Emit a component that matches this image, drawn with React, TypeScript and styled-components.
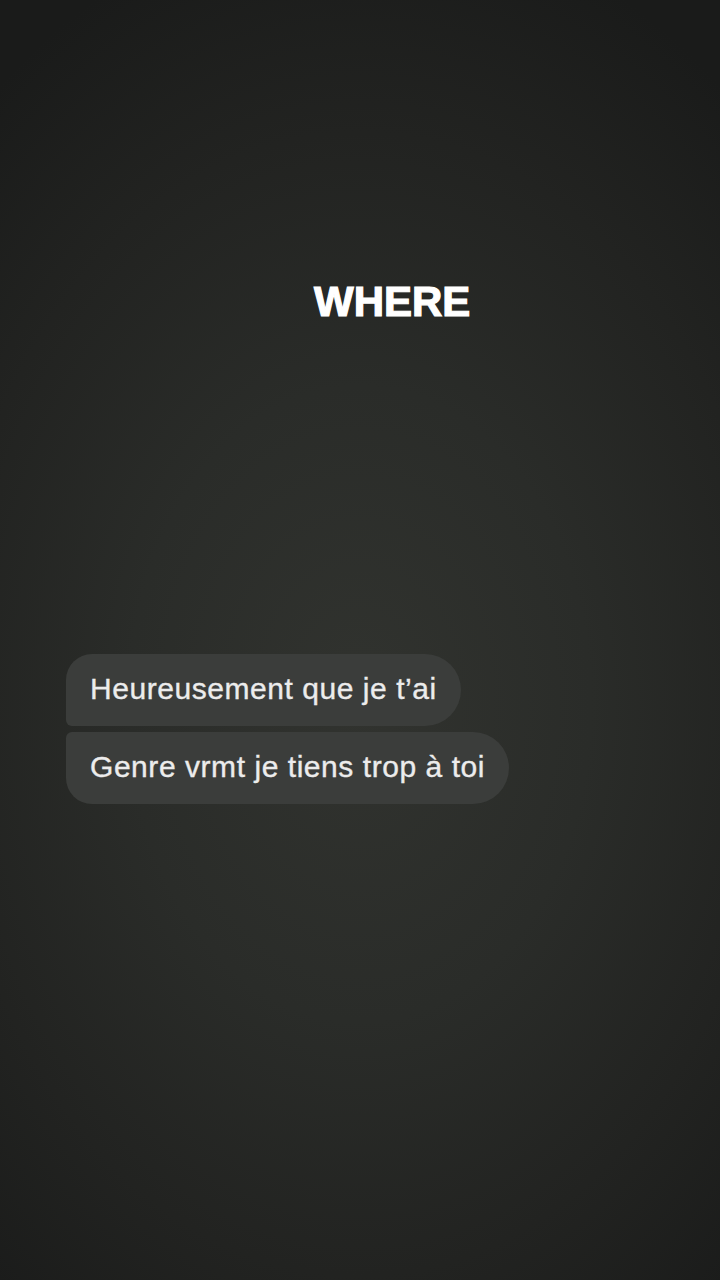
import React from "react";
import styled, { createGlobalStyle } from "styled-components";

const GlobalStyle = createGlobalStyle`
  html, body {
    margin: 0;
    padding: 0;
    background: #1c1d1c;
  }
  * {
    box-sizing: border-box;
  }
`;

const Screen = styled.div({
  width: 720,
  height: 1280,
  overflow: "hidden",
  display: "flex",
  flexDirection: "column",
  background:
    "radial-gradient(ellipse 80% 62% at 50% 55%, #31332f 0%, #2a2c29 40%, #222321 72%, #1a1b1a 100%)",
  fontFamily: "\"Liberation Sans\", Arial, sans-serif",
});

const Title = styled.h1({
  margin: "281px 0 0 314px",
  fontSize: 42,
  lineHeight: "42px",
  fontWeight: 700,
  color: "#ffffff",
  letterSpacing: 0,
  WebkitTextStroke: "1.2px #ffffff",
});

const Thread = styled.div({
  marginTop: 331,
  paddingLeft: 66,
  display: "flex",
  flexDirection: "column",
  alignItems: "flex-start",
  gap: 6,
});

type BubbleProps = { $place: "first" | "last" };

const Bubble = styled.div<BubbleProps>(({ $place }) => ({
  padding: "20px 24px 22px 24px",
  background: "#3b3d3b",
  color: "#ececec",
  fontSize: 30,
  lineHeight: "30px",
  letterSpacing: 0.55,
  whiteSpace: "nowrap",
  WebkitTextStroke: "0.35px #ececec",
  borderRadius: $place === "first" ? "26px 36px 36px 6px" : "6px 36px 36px 26px",
}));

export default function App() {
  return (
    <>
      <GlobalStyle />
      <Screen>
        <Title>WHERE</Title>
        <Thread>
          <Bubble $place="first">Heureusement que je t’ai</Bubble>
          <Bubble $place="last">Genre vrmt je tiens trop à toi</Bubble>
        </Thread>
      </Screen>
    </>
  );
}
